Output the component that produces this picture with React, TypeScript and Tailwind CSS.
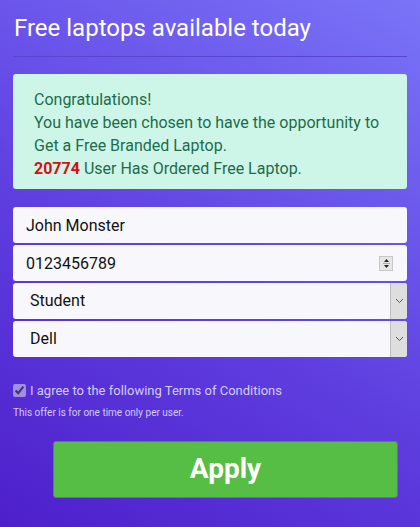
import { useState } from "react";

const font = { fontFamily: "Roboto, 'Liberation Sans', sans-serif" };

function Chevron() {
  return (
    <svg width="9" height="6" viewBox="0 0 9 6" fill="none">
      <path d="M1 1l3.5 3.5L8 1" stroke="#555" strokeWidth="1" />
    </svg>
  );
}

function SelectBox({ value }: { value: string }) {
  return (
    <div className="flex h-[36px] w-full overflow-hidden rounded-[3px] bg-[#f8f8fc]">
      <div className="flex flex-1 items-center pl-[17px] text-[16px] text-[#111]">{value}</div>
      <div className="flex w-[17px] items-center justify-center border-l border-[#bdbdbd] bg-[#dedede]">
        <Chevron />
      </div>
    </div>
  );
}

export default function App() {
  const [agree, setAgree] = useState(true);
  const [name, setName] = useState("John Monster");
  const [phone, setPhone] = useState("0123456789");

  return (
    <div
      className="min-h-[527px] w-full bg-[linear-gradient(30deg,#4d1fcb_0%,#5f3fe0_45%,#7a74f8_100%)] px-[13px] pt-[13px] pb-[28px]"
      style={font}
    >
      <h1 className="pl-[1px] text-[24px] leading-[30px] text-white">Free laptops available today</h1>
      <div className="mt-[13px] h-px bg-[#5a45d0]" />

      <div className="mt-[17px] rounded-[3px] bg-[#cdf6e8] pl-[21px] pr-[14px] pt-[14px] pb-[9px] text-[16px] leading-[23px] text-[#1f6b4b]">
        <p>Congratulations!</p>
        <p>You have been chosen to have the opportunity to Get a Free Branded Laptop.</p>
        <p>
          <span className="font-bold text-[#d40f0f]">20774</span> User Has Ordered Free Laptop.
        </p>
      </div>

      <div className="mt-[18px] flex flex-col gap-[2px]">
        <input
          value={name}
          onChange={(e) => setName(e.target.value)}
          className="h-[36px] w-full rounded-[3px] bg-[#f8f8fc] px-[13px] text-[16px] text-[#111] outline-none"
          style={font}
        />
        <div className="flex h-[36px] w-full items-center rounded-[3px] bg-[#f8f8fc] pr-[14px]">
          <input
            value={phone}
            onChange={(e) => setPhone(e.target.value)}
            className="h-full flex-1 bg-transparent px-[13px] text-[16px] text-[#111] outline-none"
            style={font}
          />
          <div className="flex h-[15px] w-[14px] flex-col items-center justify-center border border-[#c8c8c8] bg-[#e6e6e6]">
            <svg width="7" height="11" viewBox="0 0 7 11">
              <path d="M3.5 1L6 4H1z" fill="#222" />
              <path d="M0 5.5h7" stroke="#999" strokeWidth="0.8" />
              <path d="M3.5 10L6 7H1z" fill="#222" />
            </svg>
          </div>
        </div>
        <SelectBox value="Student" />
        <SelectBox value="Dell" />
      </div>

      <label className="mt-[24px] flex items-center gap-[4px] text-[13px] leading-[19.5px] text-[#d3cdf5]">
        <input
          type="checkbox"
          checked={agree}
          onChange={(e) => setAgree(e.target.checked)}
          className="h-[13px] w-[13px] accent-[#c2b9f0] opacity-70"
        />
        I agree to the following Terms of Conditions
      </label>
      <p className="mt-[4px] text-[10px] leading-[15px] text-[#d3cdf5]">This offer is for one time only per user.</p>

      <div className="mt-[21px] flex">
        <button className="ml-[40px] h-[57px] w-[345px] rounded-[3px] border border-[#b24d8b] bg-[#56bd45] text-[28px] font-bold text-white">
          Apply
        </button>
      </div>
    </div>
  );
}
